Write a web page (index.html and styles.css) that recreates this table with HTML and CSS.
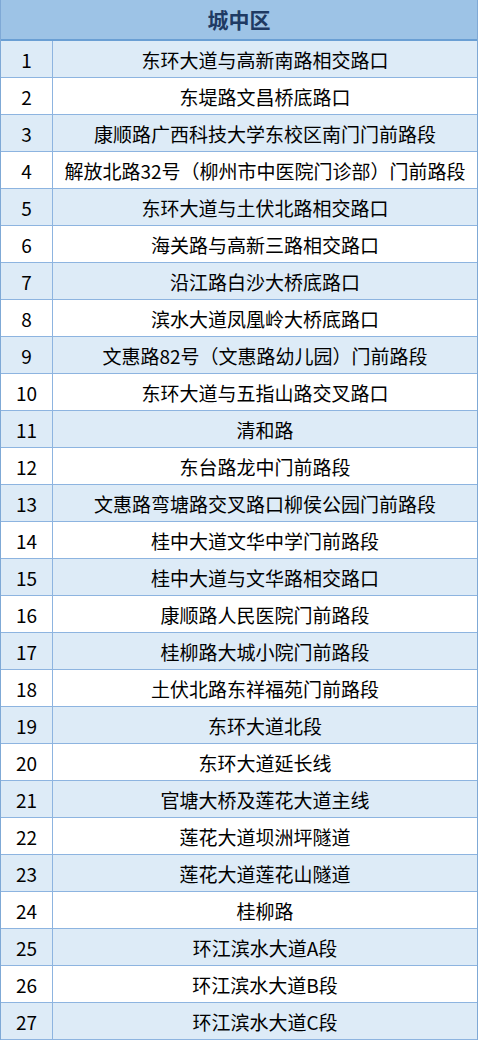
FILE: index.html
```html
<!DOCTYPE html>
<html lang="zh-CN">
<head>
<meta charset="utf-8">
<title>城中区</title>
<link rel="stylesheet" href="styles.css">
</head>
<body>
<div class="sheet">
  <div class="head">城中区</div>
  <div class="row alt"><div class="num">1</div><div class="name">东环大道与高新南路相交路口</div></div>
  <div class="row"><div class="num">2</div><div class="name">东堤路文昌桥底路口</div></div>
  <div class="row alt"><div class="num">3</div><div class="name">康顺路广西科技大学东校区南门门前路段</div></div>
  <div class="row"><div class="num">4</div><div class="name">解放北路32号（柳州市中医院门诊部）门前路段</div></div>
  <div class="row alt"><div class="num">5</div><div class="name">东环大道与土伏北路相交路口</div></div>
  <div class="row"><div class="num">6</div><div class="name">海关路与高新三路相交路口</div></div>
  <div class="row alt"><div class="num">7</div><div class="name">沿江路白沙大桥底路口</div></div>
  <div class="row"><div class="num">8</div><div class="name">滨水大道凤凰岭大桥底路口</div></div>
  <div class="row alt"><div class="num">9</div><div class="name">文惠路82号（文惠路幼儿园）门前路段</div></div>
  <div class="row"><div class="num">10</div><div class="name">东环大道与五指山路交叉路口</div></div>
  <div class="row alt"><div class="num">11</div><div class="name">清和路</div></div>
  <div class="row"><div class="num">12</div><div class="name">东台路龙中门前路段</div></div>
  <div class="row alt"><div class="num">13</div><div class="name">文惠路弯塘路交叉路口柳侯公园门前路段</div></div>
  <div class="row"><div class="num">14</div><div class="name">桂中大道文华中学门前路段</div></div>
  <div class="row alt"><div class="num">15</div><div class="name">桂中大道与文华路相交路口</div></div>
  <div class="row"><div class="num">16</div><div class="name">康顺路人民医院门前路段</div></div>
  <div class="row alt"><div class="num">17</div><div class="name">桂柳路大城小院门前路段</div></div>
  <div class="row"><div class="num">18</div><div class="name">土伏北路东祥福苑门前路段</div></div>
  <div class="row alt"><div class="num">19</div><div class="name">东环大道北段</div></div>
  <div class="row"><div class="num">20</div><div class="name">东环大道延长线</div></div>
  <div class="row alt"><div class="num">21</div><div class="name">官塘大桥及莲花大道主线</div></div>
  <div class="row"><div class="num">22</div><div class="name">莲花大道坝洲坪隧道</div></div>
  <div class="row alt"><div class="num">23</div><div class="name">莲花大道莲花山隧道</div></div>
  <div class="row"><div class="num">24</div><div class="name">桂柳路</div></div>
  <div class="row alt"><div class="num">25</div><div class="name">环江滨水大道A段</div></div>
  <div class="row"><div class="num">26</div><div class="name">环江滨水大道B段</div></div>
  <div class="row alt"><div class="num">27</div><div class="name">环江滨水大道C段</div></div>
</div>
</body>
</html>
```
FILE: styles.css
```css
html, body {
  margin: 0;
  padding: 0;
  background: #ffffff;
}
body {
  font-family: "Noto Sans CJK SC", "Noto Sans", sans-serif;
  color: #000000;
}
.sheet {
  width: 478px;
  box-sizing: border-box;
  border-left: 1px solid #7fa9d6;
  border-right: 1px solid #7fa9d6;
}
.head {
  height: 39px;
  background: #9dc3e6;
  border-bottom: 2px solid #6a9fd4;
  display: flex;
  align-items: center;
  justify-content: center;
  font-size: 21px;
  font-weight: bold;
  color: #1f3a63;
  line-height: 1;
}
.row {
  display: grid;
  grid-template-columns: 52px 1fr;
  height: 36px;
  border-bottom: 1px solid #8db4e0;
  background: #ffffff;
}
.row.alt {
  background: #ddebf7;
}
.num, .name {
  display: flex;
  align-items: center;
  justify-content: center;
  font-size: 19px;
  line-height: 1;
  white-space: nowrap;
}
.num {
  border-right: 1px solid #8db4e0;
}
```
